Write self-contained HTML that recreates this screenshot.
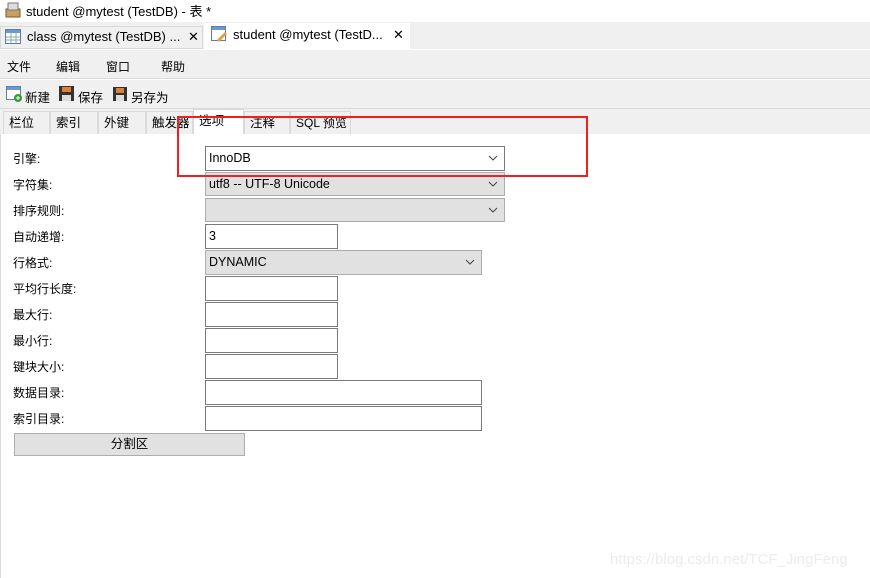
<!DOCTYPE html>
<html><head><meta charset="utf-8"><style>
*{margin:0;padding:0;box-sizing:border-box}
body{width:870px;height:578px;background:#fff;font-family:"Liberation Sans","Noto Sans CJK SC",sans-serif;font-size:12px;color:#000;position:relative;overflow:hidden}
.a{position:absolute}
.lbl{position:absolute;left:13px;font-size:12px}
.box{position:absolute;border:1px solid #7a7a7a;background:#fff;padding-left:3px;font-size:12.5px;line-height:22px}
.sel{background:#e1e1e1;border-color:#adadad}
.chev{position:absolute;right:6px;top:8px}
.st{position:absolute;top:111px;height:23px;line-height:23px;padding-left:5px;background:#f0f0f0;border:1px solid #d9d9d9;border-bottom:none;font-size:12.5px;white-space:nowrap;overflow:visible}
</style></head><body>
<div class="a" style="left:0;top:0;width:870px;height:22px;background:#fff"></div>
<svg class="a" style="left:5px;top:2px" width="16" height="16"><rect x="1" y="7" width="14" height="8" fill="#c8a064" stroke="#7a5a2a"/><rect x="3" y="1" width="10" height="7" fill="#ddd" stroke="#777"/></svg>
<div class="a" style="left:26px;top:1px;font-size:13px">student @mytest (TestDB) - 表 *</div>
<div class="a" style="left:0;top:22px;width:870px;height:27px;background:#f0f0f0"></div>
<div class="a" style="left:0;top:26px;width:203px;height:23px;background:#f0f0f0;border:1px solid #d9d9d9"></div>
<svg class="a" style="left:5px;top:29px" width="16" height="15"><rect x="0.5" y="0.5" width="15" height="14" fill="#fff" stroke="#5a7ea8"/><rect x="1" y="1" width="14" height="3" fill="#6a9ad0"/><path d="M1 8h14M1 11h14M6 4v10M11 4v10" stroke="#8aa" /></svg>
<div class="a" style="left:27px;top:29px;font-size:13px">class @mytest (TestDB) ...</div>
<div class="a" style="left:188px;top:29px;font-size:13px">✕</div>
<div class="a" style="left:204px;top:23px;width:206px;height:26px;background:#fff"></div>
<svg class="a" style="left:211px;top:26px" width="16" height="16"><rect x="0.5" y="0.5" width="14" height="14" fill="#fff" stroke="#5a7ea8"/><rect x="1" y="1" width="13" height="3" fill="#6a9ad0"/><path d="M6 14l8-8 2 2-8 8z" fill="#e0a040"/></svg>
<div class="a" style="left:233px;top:27px;font-size:13px">student @mytest (TestD...</div>
<div class="a" style="left:393px;top:27px;font-size:13px">✕</div>
<div class="a" style="left:0;top:50px;width:870px;height:29px;background:#f0f0f0;border-bottom:1px solid #d9d9d9"></div>
<div class="a" style="left:7px;top:58px">文件</div><div class="a" style="left:56px;top:58px">编辑</div><div class="a" style="left:106px;top:58px">窗口</div><div class="a" style="left:161px;top:58px">帮助</div>
<div class="a" style="left:0;top:80px;width:870px;height:29px;background:#f0f0f0;border-bottom:1px solid #d9d9d9"></div>
<svg class="a" style="left:6px;top:86px" width="17" height="16"><rect x="0.5" y="0.5" width="14" height="13" fill="#fff" stroke="#5a7ea8"/><rect x="1" y="1" width="13" height="3" fill="#6a9ad0"/><circle cx="12" cy="12" r="4" fill="#3a9a3a"/><path d="M10 12h4M12 10v4" stroke="#fff"/></svg>
<div class="a" style="left:25px;top:87px;font-size:12.5px">新建</div>
<svg class="a" style="left:59px;top:86px" width="15" height="15"><rect x="0" y="0" width="15" height="15" fill="#333"/><rect x="3" y="1" width="9" height="5" fill="#e08030"/><rect x="3" y="9" width="9" height="6" fill="#ddd"/></svg>
<div class="a" style="left:78px;top:87px;font-size:12.5px">保存</div>
<svg class="a" style="left:112px;top:86px" width="16" height="15"><rect x="1" y="1" width="14" height="14" fill="#333"/><rect x="4" y="2" width="8" height="5" fill="#e08030"/><rect x="4" y="9" width="8" height="6" fill="#ddd"/></svg>
<div class="a" style="left:131px;top:87px;font-size:12.5px">另存为</div>
<div class="a" style="left:0;top:109px;width:870px;height:25px;background:#f0f0f0"></div>
<div class="st" style="left:3px;width:47px">栏位</div>
<div class="st" style="left:50px;width:48px">索引</div>
<div class="st" style="left:98px;width:48px">外键</div>
<div class="st" style="left:146px;width:47px">触发器</div>
<div class="st" style="left:193px;top:109px;height:26px;width:51px;background:#fff;border-color:#d9d9d9">选项</div>
<div class="st" style="left:244px;width:46px">注释</div>
<div class="st" style="left:290px;width:61px;font-size:12px">SQL 预览</div>
<div class="a" style="left:0;top:134px;width:870px;height:444px;background:#fff;border-left:1px solid #d9d9d9"></div>
<div class="lbl" style="top:150px">引擎:</div>
<div class="lbl" style="top:176px">字符集:</div>
<div class="lbl" style="top:202px">排序规则:</div>
<div class="lbl" style="top:228px">自动递增:</div>
<div class="lbl" style="top:254px">行格式:</div>
<div class="lbl" style="top:280px">平均行长度:</div>
<div class="lbl" style="top:306px">最大行:</div>
<div class="lbl" style="top:332px">最小行:</div>
<div class="lbl" style="top:358px">键块大小:</div>
<div class="lbl" style="top:384px">数据目录:</div>
<div class="lbl" style="top:410px">索引目录:</div>
<div class="box" style="left:205px;top:146px;width:300px;height:25px">InnoDB<svg class="chev" width="10" height="6"><path d="M1 1l4 4 4-4" stroke="#444" fill="none"/></svg></div>
<div class="box sel" style="left:205px;top:172px;width:300px;height:24px">utf8 -- UTF-8 Unicode<svg class="chev" width="10" height="6"><path d="M1 1l4 4 4-4" stroke="#444" fill="none"/></svg></div>
<div class="box sel" style="left:205px;top:198px;width:300px;height:24px"><svg class="chev" width="10" height="6"><path d="M1 1l4 4 4-4" stroke="#444" fill="none"/></svg></div>
<div class="box" style="left:205px;top:224px;width:133px;height:25px">3</div>
<div class="box sel" style="left:205px;top:250px;width:277px;height:25px">DYNAMIC<svg class="chev" width="10" height="6"><path d="M1 1l4 4 4-4" stroke="#444" fill="none"/></svg></div>
<div class="box" style="left:205px;top:276px;width:133px;height:25px"></div>
<div class="box" style="left:205px;top:302px;width:133px;height:25px"></div>
<div class="box" style="left:205px;top:328px;width:133px;height:25px"></div>
<div class="box" style="left:205px;top:354px;width:133px;height:25px"></div>
<div class="box" style="left:205px;top:380px;width:277px;height:25px"></div>
<div class="box" style="left:205px;top:406px;width:277px;height:25px"></div>
<div class="a" style="left:14px;top:433px;width:231px;height:23px;background:#e1e1e1;border:1px solid #adadad;text-align:center;line-height:21px;font-size:12.5px">分割区</div>
<div class="a" style="left:177px;top:116px;width:411px;height:61px;border:2px solid #f02020"></div>
<div class="a" style="left:610px;top:551px;font-size:15px;color:#ececec;white-space:nowrap">https://blog.csdn.net/TCF_JingFeng</div>
</body></html>
